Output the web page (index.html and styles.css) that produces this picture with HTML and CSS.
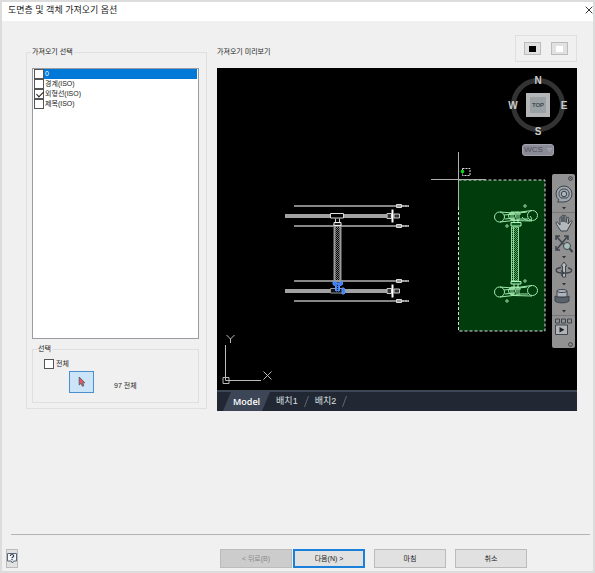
FILE: index.html
```html
<!DOCTYPE html>
<html lang="ko">
<head>
<meta charset="UTF-8" />
<meta name="viewport" content="width=device-width, initial-scale=1" />
<title>도면층 및 객체 가져오기 옵션</title>
<link rel="stylesheet" href="styles.css">
</head>
<body>

<div class="dialog">
  <header class="title-bar">
    <h1>도면층 및 객체 가져오기 옵션</h1>
    <button class="close" aria-label="닫기">
      <svg width="8" height="8" viewBox="0 0 8 8"><path d="M.7.7 7.3 7.3M7.3.7.7 7.3" stroke="#333" stroke-width="1" /></svg>
    </button>
  </header>

  <main class="content">
    <fieldset class="group import">
      <legend>가져오기 선택</legend>
      <div class="layer-list">
        <label class="layer selected"><input type="checkbox"><span>0</span></label>
        <label class="layer"><input type="checkbox"><span>경계(ISO)</span></label>
        <label class="layer"><input type="checkbox" checked><span>외형선(ISO)</span></label>
        <label class="layer"><input type="checkbox"><span>제목(ISO)</span></label>
      </div>
      <fieldset class="group pick">
        <legend>선택</legend>
        <label class="all"><input type="checkbox"><span>전체</span></label>
        <div class="pick-row">
          <button class="pick-button" aria-label="객체 선택">
            <svg width="8" height="12" viewBox="0 0 8 12"><path d="M1.2 1v8l1.9-1.7 1.4 3 1.4-.6-1.3-2.9h2.2z" fill="#f0525a" stroke="#555b66" stroke-width=".9" /></svg>
          </button>
          <span>97 전체</span>
        </div>
      </fieldset>
    </fieldset>

    <section class="preview">
      <div class="preview-head">
        <h2>가져오기 미리보기</h2>
        <div class="backgrounds">
          <button class="swatch black" aria-label="검은색 배경"></button>
          <button class="swatch white" aria-label="흰색 배경"></button>
        </div>
      </div>

      <div class="viewport">
        <svg class="drawing" viewBox="217 68 360 322">
          <defs>
            <pattern id="mesh" width="2" height="2" patternUnits="userSpaceOnUse">
              <path d="M0 0h1v1H0zM1 1h1v1H1z" fill="#777" />
            </pattern>
            <pattern id="green-mesh" width="2" height="2" patternUnits="userSpaceOnUse">
              <path d="M0 0h1v1H0zM1 1h1v1H1z" fill="#5fa86b" />
            </pattern>
            <g id="rail">
              <path d="M294 0h115" stroke="#868686" stroke-width="2" />
              <path d="M396.500-1.500h5v3h-5z" fill="#999" stroke="#ddd" />
              <path d="M402 0h7" stroke="#aaa" stroke-width="2" stroke-dasharray="2 1" />
            </g>
            <g id="beam">
              <path d="M285 0h107" stroke="#a2a2a2" stroke-width="4" />
              <path d="M387-2.500h4.500v5H387zM394-2h5.500v4H394z" fill="#333" stroke="#ccc" stroke-width="1" />
              <path d="M392.500-6.500v13" stroke="#fff" stroke-width="2" />
            </g>
            <g id="arm" fill="none" stroke="#9fe8ab" stroke-width="1">
              <circle cx="499.500" cy="1" r="5" />
              <circle cx="532.500" cy="-.5" r="5" />
              <path d="M500-4 513-3l19-2.500M500 6l13-1.500 19 .5M504-1l10-1M505 3l9-1M519-3l8-1M519 3l9 0" />
              <path d="M511-4h8v8h-8zM509-2h12M513-4v9M517-4v9" />
              <circle cx="512" cy="0" r="3.500" />
              <circle cx="525" cy="-10" r="1.200" />
              <circle cx="507" cy="10" r="1.200" />
            </g>
          </defs>

          <!-- front view -->
          <use href="#rail" y="206" />
          <use href="#beam" y="216" />
          <use href="#rail" y="226" />
          <use href="#rail" y="281" />
          <use href="#beam" y="291" />
          <use href="#rail" y="301" />
          <path d="M334.500 225h6v56h-6z" fill="url(#mesh)" stroke="#999" stroke-width="2" />
          <path d="M330.500 213.500h13v4.500h-13z" fill="#000" stroke="#ddd" />
          <path d="M335.500 218.500v4M339.500 218.500v4" stroke="#ccc" />
          <path d="M334 222.500h7v3h-7z" fill="#222" stroke="#eee" />
          <path d="M330.500 288.500h13v4.500h-13z" fill="#111" stroke="#999" />
          <path d="M333 281.500h2.500l1 1.500h3l1-1.500h2v3l-3 1.500v5h-4v-5l-2.500-1.500zM342 288h2l1 2v3l-1 1h-2z" fill="#3c7dee" stroke="#5c95f5" />
          <path d="M337.500 285v5M335 291.500h6" stroke="#06122c" stroke-dasharray="1 1" />

          <!-- selection window with the side view -->
          <path d="M458.500 180h86.500v151h-86.500z" fill="#003c0c" stroke="#ddd" stroke-dasharray="3 2" />
          <use href="#arm" y="216" />
          <path d="M522 217c3 4 8 4 10 2l-2-3" fill="none" stroke="#9fe8ab" />
          <use href="#arm" y="291" />
          <path d="M511.500 227h7v54h-7z" fill="url(#green-mesh)" stroke="#8fdc9c" />
          <path d="M513.500 227v54" stroke="#8fdc9c" />
          <path d="M511 222.500h10v3.500h-10zM511 281.500h10v2.500h-10zM514 219v3M518 219v3M514 284v4M518 284v4" fill="#0a5c1c" stroke="#b4f5be" />
          <path d="M458.500 152v55M431 179.500h55" stroke="#b0b0b0" />
          <path d="M462.500 168.500h7.500v7h-7.500z" fill="none" stroke="#ddd" stroke-dasharray="2 1" />
          <circle cx="462.500" cy="171.500" r="1.800" fill="#00e010" />

          <!-- axes -->
          <path d="M225.500 345v35.500h35.500M223 377.500h6v6h-6zM226.500 335l4 4 4-4M230.500 339v4M263.500 371.500l8 8M271.500 371.500l-8 8" fill="none" stroke="#bbb" />
        </svg>

        <svg class="compass" width="64" height="64" viewBox="0 0 64 64">
          <circle cx="32" cy="32" r="24.500" fill="none" stroke="#333" stroke-width="5" />
          <path d="M20 20h24v24H20z" fill="#b3b5b6" />
          <path d="M24 24h16v16H24z" fill="#9aa1a5" />
          <text class="face" x="32" y="34">TOP</text>
          <text x="32" y="11">N</text>
          <text x="32" y="62">S</text>
          <text x="7" y="36">W</text>
          <text x="58" y="36">E</text>
        </svg>

        <button class="wcs">WCS
          <svg width="5" height="4" viewBox="0 0 5 4"><path d="M.5.5h4l-2 3z" fill="none" stroke="#b4b4c2" stroke-width=".7" /></svg>
        </button>

        <div class="nav-bar">
          <svg class="cap" width="5" height="5" viewBox="0 0 5 5"><circle cx="2.500" cy="2.500" r="1.900" /><path d="M1.700 1.700l1.600 1.600M3.300 1.700 1.700 3.300" /></svg>
          <button class="wheel" aria-label="휠">
            <svg width="22" height="30" viewBox="0 0 22 30">
              <path d="M3 12a8 8 0 1 1 8 8H4.500l1.500-2a8 8 0 0 1-3-6z" fill="#a0a6ad" /><path d="M7 8.500c2-2 6-2 8 0 2 3 1 6-1 7.500H8c-2-1.500-3-4.500-1-7.500z" /><circle cx="11" cy="12" r="2.700" fill="#b0b5ba" /><path class="more" d="M9 25h4l-2 2.500z" />
            </svg>
          </button>
          <button class="pan ruled" aria-label="초점이동">
            <svg width="22" height="21" viewBox="0 0 22 21">
              <path d="M8 18C6 15 3.500 12 3 10c0-1.500 1.500-1 2-.3L7 12V5c0-1.500 2-1.500 2 0v4-6c0-1.500 2-1.500 2 0v6-5.500c0-1.500 2-1.500 2 0V9.500l1-4.500c.5-1.300 2-1 1.800.3L15 11l2.500-3c1-1 2.200 0 1.300 1.300L15 16l-1 2z" fill="#b3b8bc" />
            </svg>
          </button>
          <button class="zoom" aria-label="줌">
            <svg width="22" height="26" viewBox="0 0 22 26">
              <path d="M4 3l9 10M14 3 4 15M3 6V2h4M11 2h4v4M3 12v4h4" stroke-width="1.500" /><circle cx="14" cy="12" r="3.500" fill="#a9bdb8" /><path d="m16.500 14.500 3 3.500" stroke-width="2" /><path class="more" d="M9 22h4l-2 2.500z" />
            </svg>
          </button>
          <button class="orbit" aria-label="궤도">
            <svg width="22" height="27" viewBox="0 0 22 27">
              <path d="M9.500 17V6H8l3-4 3 4h-1.500v11z" fill="#b9bdc2" /><path d="M8 7.500c-7 1-6 5 0 5.500h6c6-.5 6-4 1-5M8 10.500 11 13l-3 2.500" stroke-width="1.300" /><path class="more" d="M9 23h4l-2 2.500z" />
            </svg>
          </button>
          <button class="view" aria-label="카메라">
            <svg width="22" height="28" viewBox="0 0 22 28">
              <path d="M4 4c0-2 10-2 10 0v6H4z" fill="#aeb4bb" /><path d="M4 4c0 2 10 2 10 0" /><path d="M2 9c2 2 12 2 14 0v5c-2 2.500-12 2.500-14 0z" fill="#59616b" /><path class="more" d="M9 23h4l-2 2.500z" />
            </svg>
          </button>
          <button class="motion ruled" aria-label="쇼모션">
            <svg width="22" height="24" viewBox="0 0 22 24">
              <path d="M2.500 3h4v4h-4zM8.500 3h4v4h-4zM14.500 3h4v4h-4z" /><path d="M2.500 9h12v9.500h-12z" fill="#b0b4b8" /><path d="M6.500 11v5.500l5-2.700z" fill="#222" stroke="none" />
            </svg>
          </button>
          <svg class="cap" width="5" height="5" viewBox="0 0 5 5"><circle cx="2.500" cy="2.500" r="1.900" /></svg>
        </div>
      </div>

      <nav class="tabs">
        <svg class="tab-edge" width="9" height="19" viewBox="0 0 9 19"><path d="M9 0v19H0L8 0z" /></svg>
        <a class="tab active" href="#model">Model</a>
        <svg class="tab-edge" width="9" height="19" viewBox="0 0 9 19"><path d="M0 0h9L1 19H0z" /></svg>
        <a class="tab" href="#layout1">배치1</a>
        <svg class="slash" width="5" height="11" viewBox="0 0 5 11"><path d="M4.500 0 .5 11" /></svg>
        <a class="tab" href="#layout2">배치2</a>
        <svg class="slash" width="5" height="11" viewBox="0 0 5 11"><path d="M4.500 0 .5 11" /></svg>
      </nav>
    </section>
  </main>

  <footer class="footer">
    <button class="help" aria-label="도움말">
      <svg width="10" height="11" viewBox="0 0 10 11"><path d="M.5.500h9v7.500H6.500L5.500 10 4 8H.5z" fill="#f4f8fc" stroke="#5b6673" /><path d="M3.300 3c0-2 3.400-2 3.400 0C6.700 4 5 4 5 5.300M5 6v1.200" fill="none" stroke="#333f50" stroke-width="1.200" /></svg>
    </button>
    <div class="steps">
      <button class="btn" disabled>&lt; 뒤로(B)</button>
      <button class="btn primary">다음(N) &gt;</button>
    </div>
    <button class="btn">마침</button>
    <button class="btn">취소</button>
  </footer>
</div>

</body>
</html>
```
FILE: styles.css
```css
* {
  box-sizing: border-box;
}
body {
  margin: 0;
  color: #222;
  font-family: "Liberation Sans", "Noto Sans CJK KR", sans-serif;
  font-size: 7px;
  line-height: 12px;
}
button {
  display: flex;
  align-items: center;
  justify-content: center;
  margin: 0;
  padding: 0;
  border: 0;
  background: none;
  color: inherit;
  font: inherit;
}
svg {
  display: block;
}
h1, h2 {
  margin: 0;
  font-size: inherit;
  font-weight: 400;
}
.dialog {
  display: flex;
  flex-direction: column;
  min-height: 100vh;
  border: 2px solid #dcdcdc;
  background: #f0f0f0;
}

/* title bar */
.title-bar {
  display: flex;
  align-items: center;
  justify-content: space-between;
  height: 19px;
  padding: 0 0 3px 6px;
  background: #fff;
}
.title-bar h1 {
  font-size: 9px;
}
.close {
  width: 8px;
  height: 8px;
}

/* content */
.content {
  display: grid;
  grid-template-columns: 181px 1fr;
  align-items: start;
  gap: 10px;
  padding: 14px 16px 0 24px;
}
.group {
  min-width: 0;
  margin: 0;
  border: 1px solid #dfdfdf;
}
.group legend {
  padding: 0 1px;
}
.import {
  display: flex;
  flex-direction: column;
  margin-top: 11px;
  padding: 10px 7px 5px 5px;
}
.import legend {
  margin-left: -1px;
}
.layer-list {
  height: 271px;
  padding: 0 1px;
  border: 1px solid #999ca3;
  background: #fff;
}
.layer, .all {
  display: flex;
  align-items: center;
}
.layer span {
  flex: 1;
  line-height: 10px;
  padding-left: 1px;
}
.layer.selected span {
  background: #0078d7;
  color: #fff;
}
input[type="checkbox"] {
  appearance: none;
  width: 10px;
  height: 10px;
  margin: 0;
  border: 1px solid #555;
  background: #fff;
}
input[type="checkbox"]:checked::after {
  content: "";
  display: block;
  width: 3px;
  height: 6px;
  margin-left: 3px;
  border: solid #222;
  border-width: 0 1px 1px 0;
  transform: rotate(45deg);
}
.pick {
  height: 60px;
  margin-top: 4px;
  padding: 3px 0 0 11px;
}
.pick legend {
  margin-left: -7px;
}
.all {
  gap: 2px;
}
.pick-row {
  display: flex;
  align-items: center;
  gap: 20px;
  padding: 1px 0 0 25px;
}
.pick-row span {
  padding-top: 8px;
}
.pick-button {
  width: 25px;
  height: 22px;
  border: 1px solid #4a90cf;
  background: #cce4f7;
}

/* preview */
.preview-head {
  display: flex;
  align-items: flex-end;
  justify-content: space-between;
  margin-bottom: 6px;
}
.preview-head h2 {
  padding-bottom: 4px;
}
.backgrounds {
  display: flex;
  gap: 10px;
  padding: 6px 8px;
  border: 1px solid #dfdfdf;
}
.swatch {
  width: 17px;
  height: 13px;
  border: 1px solid #bbb;
  background: #e1e1e1;
}
.swatch::before {
  content: "";
  width: 7px;
  height: 6px;
  background: #000;
}
.swatch.white::before {
  background: #fff;
}
.viewport {
  position: relative;
  background: #000;
}
.drawing {
  width: 100%;
}
.compass {
  position: absolute;
  top: 5px;
  right: 7px;
}
.compass text {
  fill: #ccc;
  font-size: 10px;
  font-weight: 700;
  text-anchor: middle;
}
.compass .face {
  fill: #444b50;
  font-size: 6px;
}
.wcs {
  position: absolute;
  top: 76px;
  right: 23px;
  gap: 4px;
  width: 32px;
  height: 12px;
  border: 1px solid #a2a2ae;
  border-radius: 3px;
  background: #8b8b98;
  color: #4f4f59;
  font-size: 8px;
}
.nav-bar {
  position: absolute;
  top: 106px;
  right: 2px;
  display: flex;
  flex-direction: column;
  width: 23px;
  border-radius: 2px;
  background: #919191;
}
.nav-bar svg {
  fill: none;
  stroke: #3d444c;
}
.nav-bar .cap {
  align-self: flex-end;
  margin: 2px 2px 1px;
}
.nav-bar .more {
  fill: #333;
  stroke: none;
}
.nav-bar .ruled {
  border-top: 1px solid #777;
}

/* layout tabs */
.tabs {
  display: flex;
  align-items: center;
  height: 21px;
  padding-left: 6px;
  border-top: 2px solid #3c4656;
  background: #222833;
  font-size: 9px;
}
.tab {
  padding: 0 6px;
  color: #dde0e5;
  line-height: 19px;
  text-decoration: none;
}
.tab.active {
  padding: 0 1px;
  background: #3c4656;
  color: #fff;
  font-family: "Open Sans", sans-serif;
  font-weight: 600;
}
.tab-edge {
  fill: #3c4656;
}
.slash {
  fill: none;
  stroke: #5d6573;
}

/* footer */
.footer {
  display: flex;
  gap: 9px;
  margin: auto 3px 0 9px;
  padding: 14px 63px 3px 0;
  border-top: 1px solid #b4b4b4;
}
.help {
  width: 12px;
  height: 19px;
  margin: 0 auto 0 -5px;
  border: 1px solid #bbb;
  background: #e1e1e1;
}
.help svg {
  flex: none;
}
.steps {
  display: flex;
  gap: 1px;
}
.btn {
  width: 72px;
  height: 19px;
  border: 1px solid #bbb;
  background: #e1e1e1;
}
.btn.primary {
  border: 2px solid #1a80d9;
}
.btn:disabled {
  background: #ccc;
  color: #8a8a8a;
}
```
